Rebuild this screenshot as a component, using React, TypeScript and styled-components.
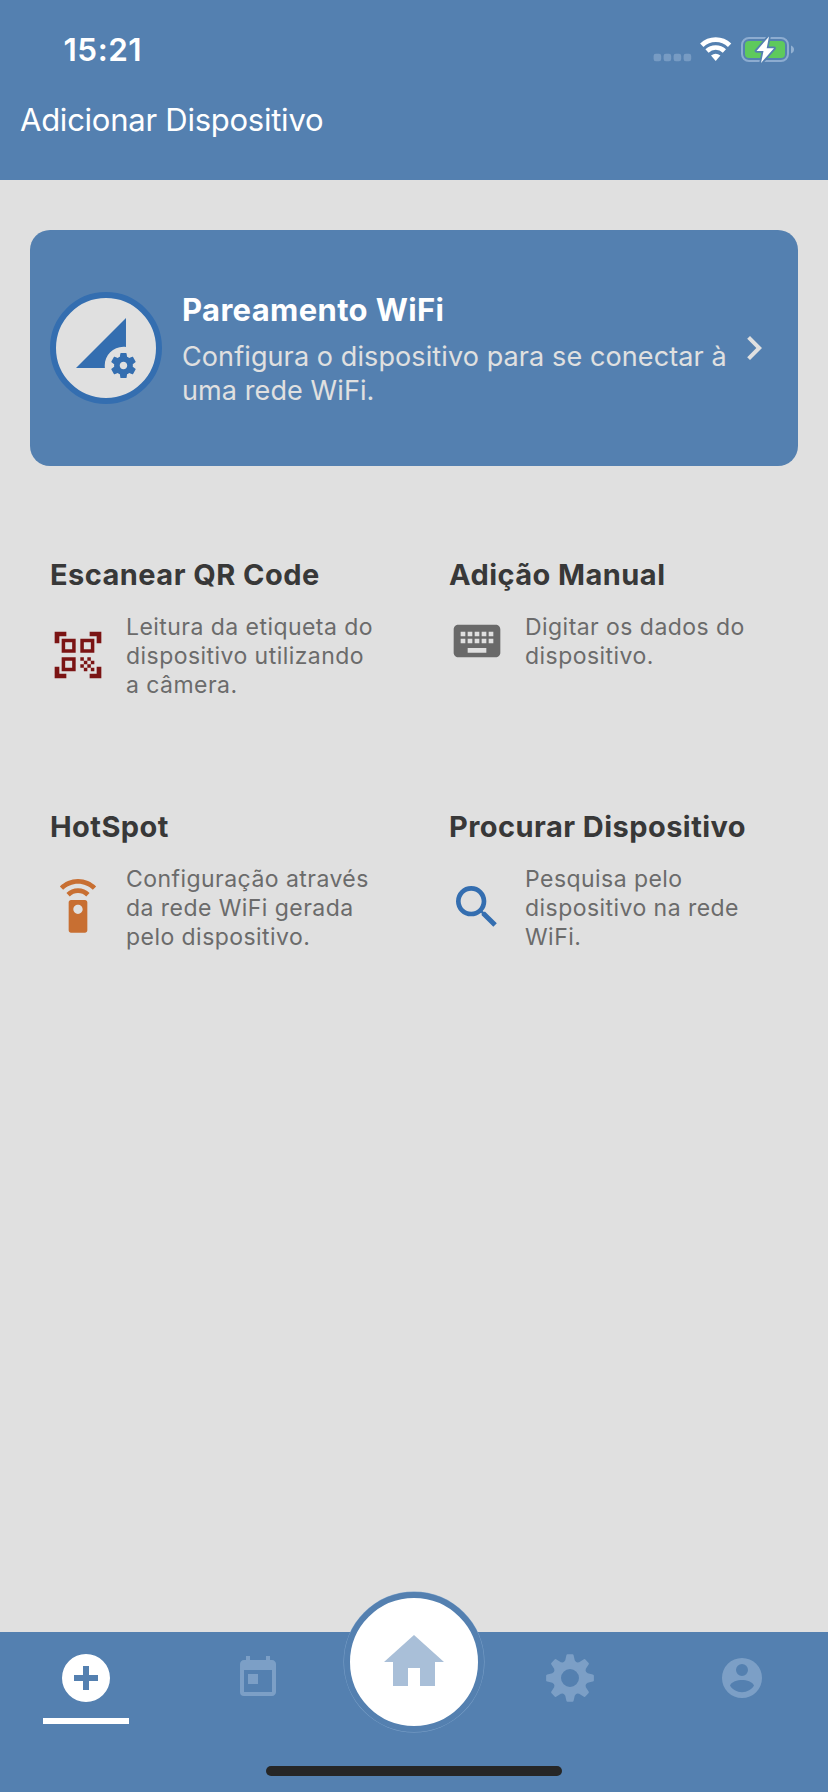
import React from "react";
import styled, { createGlobalStyle } from "styled-components";
import {
  MdChevronRight,
  MdKeyboard,
  MdPermDataSetting,
  MdQrCodeScanner,
  MdSearch,
  MdSettingsRemote,
  MdToday,
} from "react-icons/md";

const color = {
  primary: "#5480b0",
  accent: "#346eb0",
  surface: "#e0e0e0",
  heading: "#383838",
  body: "#6b6b6b",
  muted: "#7c9fc6",
};

const GlobalStyle = createGlobalStyle`
  *, *::before, *::after { box-sizing: border-box; }
  body { margin: 0; }
  h1, h2, p { margin: 0; }
  svg { display: block; flex: none; }
`;

const Screen = styled.div`
  display: flex;
  flex-direction: column;
  width: 828px;
  height: 1792px;
  overflow: hidden;
  background: ${color.surface};
  font-family: Inter, "Liberation Sans", sans-serif;
`;

const Header = styled.header`
  height: 180px;
  background: ${color.primary};
  color: #fff;
`;

const StatusBar = styled.div`
  display: flex;
  justify-content: space-between;
  height: 88px;
  padding: 30px 33px 0 63.5px;
`;

const Clock = styled.time`
  font-size: 31.5px;
  line-height: 40px;
  font-weight: 600;
  letter-spacing: 0.5px;
`;

const StatusIcons = styled.div`
  display: flex;
  padding-top: 6px;
`;

const Title = styled.h1`
  padding-left: 20px;
  font-size: 31px;
  line-height: 64px;
  font-weight: 400;
  letter-spacing: -0.25px;
`;

const Main = styled.main`
  flex: 1;
  padding: 50px 30px 0;
`;

const WifiCard = styled.button`
  display: flex;
  align-items: center;
  width: 100%;
  height: 236px;
  padding: 0 20px;
  border: 0;
  border-radius: 20px;
  background: ${color.primary};
  color: ${color.surface};
  font-family: inherit;
  text-align: left;
`;

const RoundIcon = styled.span`
  display: flex;
  flex: none;
  align-items: center;
  justify-content: center;
  width: 112px;
  height: 112px;
  margin-right: 20px;
  border: 6px solid ${color.accent};
  border-radius: 50%;
  background: ${color.surface};
  color: ${color.accent};
`;

const CardText = styled.div`
  flex: 1;
  min-width: 0;
  padding-top: 4px;
  white-space: nowrap;
`;

const CardTitle = styled.h2`
  margin-bottom: 12px;
  color: #fff;
  font-size: 31px;
  line-height: 36px;
  font-weight: 700;
  letter-spacing: 0.35px;
`;

const CardDescription = styled.p`
  font-size: 27px;
  line-height: 34px;
  letter-spacing: 0.1px;
`;

const OptionGrid = styled.section`
  display: grid;
  grid-template-columns: 399px 1fr;
  grid-auto-rows: 252px;
  padding: 92px 0 0 20px;
`;

const OptionTitle = styled.h2`
  color: ${color.heading};
  font-size: 29px;
  line-height: 34px;
  font-weight: 700;
  letter-spacing: 0.45px;
  margin-bottom: 19.5px;
`;

const OptionBody = styled.div<{ $tint: string }>`
  display: flex;
  align-items: center;
  gap: 20px;
  color: ${(p) => p.$tint};
`;

const OptionText = styled.p`
  margin: 1.5px 0 -1.5px;
  color: ${color.body};
  font-size: 23px;
  line-height: 29px;
  letter-spacing: 0.45px;
  white-space: nowrap;
`;

const TabBar = styled.nav`
  display: grid;
  grid-template-columns: 172px 172px 140px 172px 172px;
  grid-template-rows: 92px 1fr;
  height: 160px;
  background: ${color.primary};
`;

const Tab = styled.button<{ $active?: boolean }>`
  display: flex;
  flex-direction: column;
  align-items: center;
  justify-content: space-between;
  padding: 22px 0 0;
  border: 0;
  background: none;
  color: ${(p) => (p.$active ? "#fff" : color.muted)};
`;

const ActiveLine = styled.span`
  width: 86px;
  height: 6px;
  background: #fff;
`;

const HomeTab = styled.button`
  display: flex;
  align-items: center;
  justify-content: center;
  width: 140px;
  height: 140px;
  margin-top: -40px;
  padding: 0;
  border: 6px solid ${color.primary};
  border-radius: 50%;
  background: #fff;
  box-shadow: 0 0 0 0.5px #7fa3cb;
  color: #a9bfd8;
`;

const HomeIndicator = styled.div`
  grid-column: 1 / -1;
  justify-self: center;
  width: 296px;
  height: 10px;
  margin-top: 42px;
  border-radius: 5px;
  background: #262626;
`;

const gearOutline = Array.from({ length: 8 }, (_, i) => {
  const at = (deg: number, r: number) => {
    const a = ((i * 45 + deg - 90) * Math.PI) / 180;
    return `${(24 + r * Math.cos(a)).toFixed(2)} ${(24 + r * Math.sin(a)).toFixed(2)}`;
  };
  return `${i ? "L" : "M"}${at(-20, 17.2)}L${at(-15, 18.3)}L${at(-9, 23)}Q${at(-8, 24)} ${at(-6, 24)}L${at(6, 24)}Q${at(8, 24)} ${at(9, 23)}L${at(15, 18.3)}L${at(20, 17.2)}`;
}).join("");

const GearIcon = () => (
  <svg width="48" height="48" viewBox="0 0 48 48" fill="currentColor" fillRule="evenodd">
    <path d={`${gearOutline}ZM24 15a9 9 0 1 0 0 18 9 9 0 0 0 0-18Z`} />
  </svg>
);

const AddIcon = () => (
  <svg width="48" height="48" viewBox="0 0 48 48" fill="currentColor" fillRule="evenodd">
    <path d="M24 0a24 24 0 1 0 0 48 24 24 0 0 0 0-48ZM21 12h6v9h9v6h-9v9h-6v-9h-9v-6h9Z" />
  </svg>
);

const AccountIcon = () => (
  <svg width="48" height="48" viewBox="0 0 24 24" fill="currentColor" fillRule="evenodd">
    <path d="M12 2a10 10 0 1 0 0 20 10 10 0 0 0 0-20Zm0 3a3 3 0 1 1 0 6 3 3 0 0 1 0-6Zm0 8c2.3 0 5.3.9 6 2.8-1.1 2-3.4 3.3-6 3.3s-4.9-1.3-6-3.3c.7-1.9 3.7-2.8 6-2.8Z" />
  </svg>
);

const HomeIcon = () => (
  <svg width="72" height="72" viewBox="0 0 24 24" fill="currentColor">
    <path d="M10 20v-6h4v6h5v-8h3L12 3 2 12h3v8z" />
  </svg>
);

const SignalDots = () => (
  <svg width="47" height="28" viewBox="0 0 47 28" fill="#779bc3">
    {[0, 10, 20, 30].map((x) => (
      <rect key={x} x={x + 0.6} y="17.7" width="7.6" height="7.6" rx="2.2" />
    ))}
  </svg>
);

const WifiIcon = () => (
  <svg width="41" height="28" viewBox="0 0 41 28" fill="none" stroke="#fff">
    <path d="M1.8 9.2A20 20 0 0 1 29.6 9.2" strokeWidth="4.8" />
    <path d="M7 15A12.5 12.5 0 0 1 24.4 15" strokeWidth="4.6" />
    <path d="M11 19.6Q15.7 15.8 20.4 19.6L15.7 25Z" fill="#fff" stroke="none" />
  </svg>
);

const BatteryIcon = () => (
  <svg width="54" height="28" viewBox="0 0 54 28">
    <rect x="1" y="2" width="46" height="23" rx="7" fill="none" stroke="#8dacd0" strokeWidth="2" />
    <path d="M50 9.5c4 1.6 4 6.6 0 8Z" fill="#93b1d2" />
    <rect x="4" y="5" width="40" height="17" rx="4" fill="#5ec95c" />
    <path
      d="M28 0.5 15.5 15h7L20 27 33 12.2h-7.3Z"
      fill="#fff"
      stroke={color.primary}
      strokeWidth="3.6"
      strokeLinejoin="round"
      paintOrder="stroke"
    />
  </svg>
);

const options = [
  {
    title: "Escanear QR Code",
    lines: ["Leitura da etiqueta do", "dispositivo utilizando", "a câmera."],
    Icon: MdQrCodeScanner,
    tint: "#7b1414",
  },
  {
    title: "Adição Manual",
    lines: ["Digitar os dados do", "dispositivo."],
    Icon: MdKeyboard,
    tint: "#696969",
  },
  {
    title: "HotSpot",
    lines: ["Configuração através", "da rede WiFi gerada", "pelo dispositivo."],
    Icon: MdSettingsRemote,
    tint: "#c86f32",
  },
  {
    title: "Procurar Dispositivo",
    lines: ["Pesquisa pelo", "dispositivo na rede", "WiFi."],
    Icon: MdSearch,
    tint: color.accent,
  },
];

const Lines = ({ items }: { items: string[] }) => (
  <>
    {items.map((line, i) => (
      <React.Fragment key={line}>
        {i > 0 && <br />}
        {line}
      </React.Fragment>
    ))}
  </>
);

export default function App() {
  return (
    <Screen>
      <GlobalStyle />
      <Header>
        <StatusBar>
          <Clock>15:21</Clock>
          <StatusIcons>
            <SignalDots />
            <WifiIcon />
            <BatteryIcon />
          </StatusIcons>
        </StatusBar>
        <Title>Adicionar Dispositivo</Title>
      </Header>
      <Main>
        <WifiCard>
          <RoundIcon>
            <MdPermDataSetting size={60} />
          </RoundIcon>
          <CardText>
            <CardTitle>Pareamento WiFi</CardTitle>
            <CardDescription>
              <Lines items={["Configura o dispositivo para se conectar à", "uma rede WiFi."]} />
            </CardDescription>
          </CardText>
          <MdChevronRight size={48} />
        </WifiCard>
        <OptionGrid>
          {options.map(({ title, lines, Icon, tint }) => (
            <article key={title}>
              <OptionTitle>{title}</OptionTitle>
              <OptionBody $tint={tint}>
                <Icon size={56} />
                <OptionText>
                  <Lines items={lines} />
                </OptionText>
              </OptionBody>
            </article>
          ))}
        </OptionGrid>
      </Main>
      <TabBar>
        <Tab $active>
          <AddIcon />
          <ActiveLine />
        </Tab>
        <Tab>
          <MdToday size={48} />
        </Tab>
        <HomeTab>
          <HomeIcon />
        </HomeTab>
        <Tab>
          <GearIcon />
        </Tab>
        <Tab>
          <AccountIcon />
        </Tab>
        <HomeIndicator />
      </TabBar>
    </Screen>
  );
}
